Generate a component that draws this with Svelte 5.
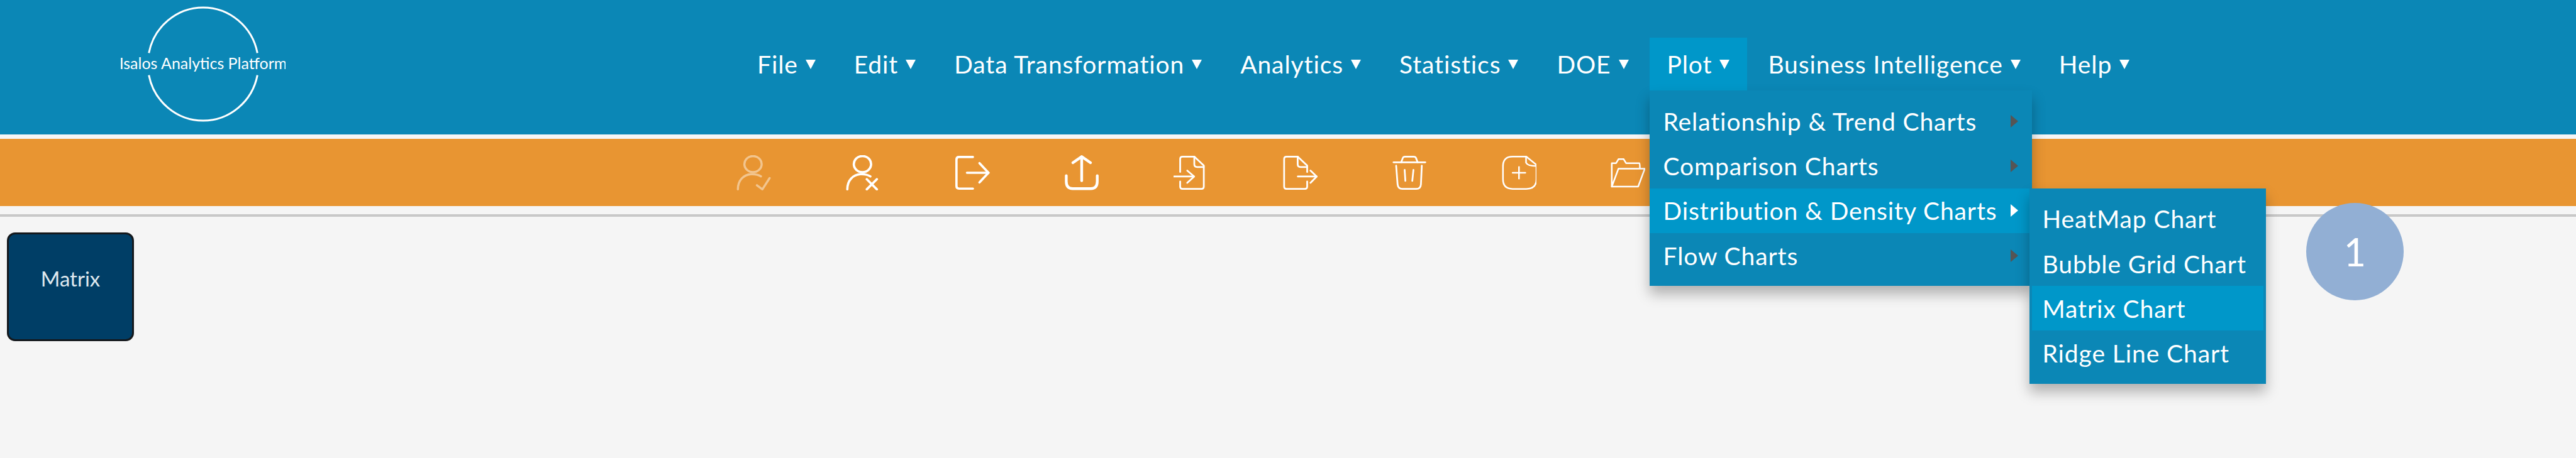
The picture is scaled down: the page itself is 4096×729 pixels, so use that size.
<script>
  const navItems = ["File", "Edit", "Data Transformation", "Analytics", "Statistics", "DOE", "Plot", "Business Intelligence", "Help"];
  const plotItems = ["Relationship & Trend Charts", "Comparison Charts", "Distribution & Density Charts", "Flow Charts"];
  const distItems = ["HeatMap Chart", "Bubble Grid Chart", "Matrix Chart", "Ridge Line Chart"];

  const head = "M5.5 6a6 5.6 0 1 0 12 0a6 5.6 0 1 0-12 0";
  // toolbar icons, all on a 24 unit box
  const icons = [
    { name: "enable", w: 1.5, off: true, d: [head, "M1 23.5C1 17 5 13.5 10 13C13 12.8 15 13.3 17 14.5", "M14.2 20.7L18 23.5L23 15.7"] },
    { name: "disable", w: 1.6, d: [head, "M1 23.5C1 17 5 13.5 10 13C13 12.8 15 13.3 17 14.5", "M14.5 16.5L21.5 23.5M21.5 16.5L14.5 23.5"] },
    { name: "logout", w: 1.6, d: ["M12.2 1H2.6Q.8 1 .8 2.8V21.2Q.8 23 2.6 23H12.2", "M8.1 12H23", "M16.8 5.3L23 12L16.8 18.7"] },
    { name: "upload", w: 1.9, d: ["M12.2 17.5V1", "M6.1 5L12.2 .8L18.3 5", "M1.5 14V18Q1.5 23 6 23H18.5Q23 23 23 18V14"] },
    { name: "import", w: 1.2, d: ["M4.6 11.4V2.4Q4.6 .8 6.2 .8H14.4L21 7V21.6Q21 23.2 19.4 23.2H6.2Q4.6 23.2 4.6 21.6V18", "M14.4 .8V6Q14.4 8 16.4 8H21", "M.3 14.6H14.1", "M9.5 10.5L14.3 14.6L9.5 19"] },
    { name: "export", w: 1.2, d: ["M16.8 11.5V7L10.2 .8H2.4Q.8 .8 .8 2.4V21.6Q.8 23.2 2.4 23.2H15.2Q16.8 23.2 16.8 21.6V18", "M10.2 .8V6Q10.2 8 12.2 8H16.8", "M10.3 14.6H23.3", "M19.1 10.5L23.4 14.6L19.1 19"] },
    { name: "trash", w: 1.2, d: ["M.8 4.7H22.8", "M6.1 4.7L7.2 1.8Q7.6 .8 8.8 .8H14.8Q16 .8 16.4 1.8L17.5 4.7", "M2.6 7L3.6 20Q3.9 23.2 7 23.2H16.6Q19.6 23.2 19.8 20L20.4 7", "M8.5 10L9 17.6", "M14.6 10L13.8 17.6"] },
    { name: "new", w: 1.1, d: ["M17 .8H7.5Q.8 .8 .8 7.5V16.5Q.8 23.2 7.5 23.2H17Q24 23.2 24 16.5V6.5Z", "M16.8 .8V5Q18 7.3 24 7.3", "M11.9 8V16", "M7.5 12H16.3"] },
    { name: "open", w: 1.1, d: ["M.8 21.6V5.3H3.8L5.5 2.5H9L10.7 5.3H20Q20.3 5.3 20.3 8.6", "M5.4 9.2H23.7L19.1 21.6H.8Z"] }
  ];
</script>

<div class="page">
  <header class="topbar">
    <svg class="logo" viewBox="0 0 262 184">
      <path d="M44.7 74.4A88 90 0 0 1 217.3 74.4M44.7 109.6A88 90 0 0 0 217.3 109.6" />
      <text x="131" y="100" text-anchor="middle">Isalos Analytics Platform</text>
    </svg>
    <nav>
      <ul class="navlist">
        {#each navItems as item}
          <li class="navitem" class:active={item === "Plot"}>
            <span class="navlabel">{item}</span>
            {#if item === "Plot"}
              <ul class="menu">
                {#each plotItems as entry}
                  <li class="row" class:current={entry.startsWith("Distribution")}>
                    <span>{entry}</span><i class="chevron"></i>
                    {#if entry.startsWith("Distribution")}
                      <ul class="submenu">
                        {#each distItems as chart}
                          <li class="row" class:current={chart === "Matrix Chart"}>{chart}</li>
                        {/each}
                      </ul>
                    {/if}
                  </li>
                {/each}
              </ul>
            {/if}
          </li>
        {/each}
      </ul>
    </nav>
  </header>

  <div class="toolbar">
    {#each icons as icon}
      <svg class="tool" class:off={icon.off} viewBox="0 0 24 24" stroke-width={icon.w} aria-label={icon.name}>
        {#each icon.d as d}
          <path {d} />
        {/each}
      </svg>
    {/each}
  </div>

  <div class="rule"></div>

  <main>
    <div class="card">Matrix</div>
  </main>

  <div class="step">1</div>
</div>

<style>
  :global(body) {
    margin: 0;
    background: #f5f5f5;
    font-family: "Lato", "Open Sans", sans-serif;
  }
  ul {
    list-style: none;
    margin: 0;
    padding: 0;
  }
  .page {
    position: relative;
    height: 729px;
    overflow: hidden;
    background: #f5f5f5;
  }
  .topbar {
    display: flex;
    align-items: center;
    height: 214px;
    padding: 0 0 10px 192px;
    background: #0b87b6;
    box-sizing: border-box;
  }
  .logo {
    width: 262px;
    height: 184px;
    fill: none;
    flex: none;
  }
  .logo path {
    stroke: #fff;
    stroke-width: 3;
  }
  .logo text {
    fill: #fff;
    font-size: 25px;
    font-family: "Lato", sans-serif;
    font-weight: 400;
  }
  nav {
    margin-left: 722px;
  }
  .navlist {
    display: flex;
    gap: 5px;
    font-size: 39px;
    letter-spacing: 0.9px;
    color: #fff;
    font-weight: 400;
  }
  .navitem {
    position: relative;
    display: flex;
    align-items: center;
    height: 84px;
    padding: 0 28px;
    white-space: nowrap;
  }
  .navitem.active {
    background: #0097c9;
  }
  .navlabel {
    display: flex;
    align-items: center;
    gap: 12px;
  }
  .navlabel::after {
    content: "";
    border-top: 15px solid #fff;
    border-left: 8px solid transparent;
    border-right: 8px solid transparent;
  }
  .menu,
  .submenu {
    position: absolute;
    background: #0b87b6;
    box-shadow: 0 13px 20px rgba(0, 0, 0, 0.28);
    padding: 13px 0;
  }
  .menu {
    top: 84px;
    left: 0;
    width: 608px;
    z-index: 2;
  }
  .submenu {
    top: 0;
    left: 604px;
    width: 376px;
    padding: 13px 4px;
    box-sizing: border-box;
    z-index: 3;
  }
  .row {
    position: relative;
    display: flex;
    align-items: center;
    justify-content: space-between;
    height: 71.3px;
    padding: 0 22px;
    box-sizing: border-box;
  }
  .submenu .row {
    padding: 0 17px;
  }
  .current {
    background: #0097c9;
  }
  .menu > .current {
    z-index: 1;
  }
  .chevron {
    border-left: 12px solid #555;
    border-top: 10.5px solid transparent;
    border-bottom: 10.5px solid transparent;
  }
  .current > .chevron {
    border-left-color: #fff;
  }
  .toolbar {
    display: flex;
    align-items: center;
    gap: 118.8px;
    height: 107px;
    margin-top: 7px;
    padding-left: 1171px;
    background: #e89532;
    box-sizing: border-box;
  }
  .tool {
    width: 55px;
    height: 56px;
    fill: none;
    stroke: #fff;
    stroke-linecap: round;
    stroke-linejoin: round;
    flex: none;
  }
  .tool.off {
    opacity: 0.45;
  }
  .rule {
    height: 4px;
    margin-top: 13px;
    background: #c8c8c8;
  }
  main {
    padding: 25px 0 0 11px;
  }
  .card {
    width: 202px;
    height: 173px;
    padding-top: 50px;
    box-sizing: border-box;
    border: 3px solid #14181c;
    border-radius: 13px;
    background: #003e66;
    color: #dfe8ee;
    font-size: 33px;
    font-weight: 400;
    text-align: center;
  }
  .step {
    position: absolute;
    left: 3667px;
    top: 323px;
    width: 155px;
    height: 155px;
    border-radius: 50%;
    background: #92afd4;
    color: #fff;
    font-size: 61px;
    font-weight: 400;
    line-height: 155px;
    text-align: center;
    z-index: 4;
  }
</style>
